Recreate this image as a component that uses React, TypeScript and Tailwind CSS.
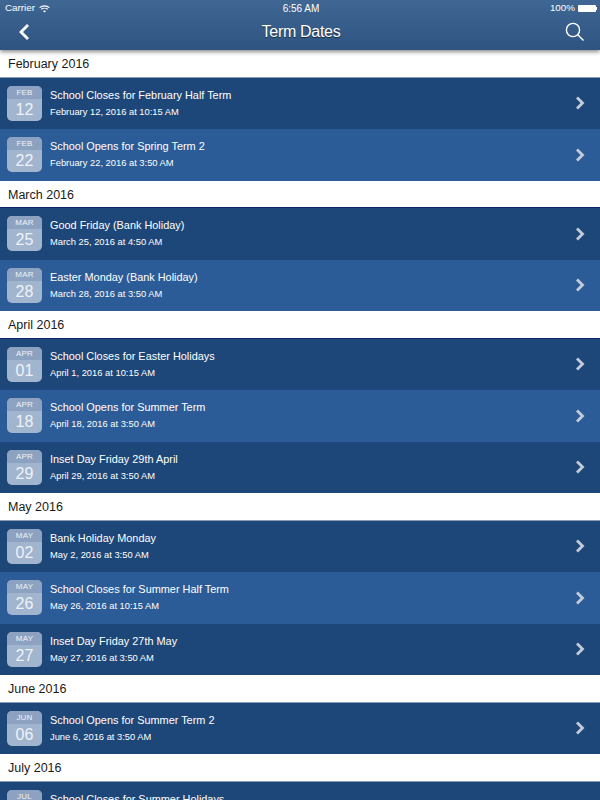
type Item = { mon: string; day: string; title: string; when: string }

const sections: { name: string; line: string; items: Item[] }[] = [
  {
    name: 'February 2016',
    line: 'border-b-[#8a9cb5]',
    items: [
      { mon: 'FEB', day: '12', title: 'School Closes for February Half Term', when: 'February 12, 2016 at 10:15 AM' },
      { mon: 'FEB', day: '22', title: 'School Opens for Spring Term 2', when: 'February 22, 2016 at 3:50 AM' },
    ],
  },
  {
    name: 'March 2016',
    line: 'border-b-[#10246b]',
    items: [
      { mon: 'MAR', day: '25', title: 'Good Friday (Bank Holiday)', when: 'March 25, 2016 at 4:50 AM' },
      { mon: 'MAR', day: '28', title: 'Easter Monday (Bank Holiday)', when: 'March 28, 2016 at 3:50 AM' },
    ],
  },
  {
    name: 'April 2016',
    line: 'border-b-[#10246b]',
    items: [
      { mon: 'APR', day: '01', title: 'School Closes for Easter Holidays', when: 'April 1, 2016 at 10:15 AM' },
      { mon: 'APR', day: '18', title: 'School Opens for Summer Term', when: 'April 18, 2016 at 3:50 AM' },
      { mon: 'APR', day: '29', title: 'Inset Day Friday 29th April', when: 'April 29, 2016 at 3:50 AM' },
    ],
  },
  {
    name: 'May 2016',
    line: 'border-b-[#8a9cb5]',
    items: [
      { mon: 'MAY', day: '02', title: 'Bank Holiday Monday', when: 'May 2, 2016 at 3:50 AM' },
      { mon: 'MAY', day: '26', title: 'School Closes for Summer Half Term', when: 'May 26, 2016 at 10:15 AM' },
      { mon: 'MAY', day: '27', title: 'Inset Day Friday 27th May', when: 'May 27, 2016 at 3:50 AM' },
    ],
  },
  {
    name: 'June 2016',
    line: 'border-b-[#8a9cb5]',
    items: [{ mon: 'JUN', day: '06', title: 'School Opens for Summer Term 2', when: 'June 6, 2016 at 3:50 AM' }],
  },
  {
    name: 'July 2016',
    line: 'border-b-[#8a9cb5]',
    items: [{ mon: 'JUL', day: '21', title: 'School Closes for Summer Holidays', when: 'July 21, 2016 at 3:50 AM' }],
  },
]

function Row({ item, odd }: { item: Item; odd: boolean }) {
  return (
    <div className={`h-[51.5px] shrink-0 flex items-center pl-[7px] pr-[15px] ${odd ? 'bg-[#2c5c98]' : 'bg-[#1e4779]'}`}>
      <div className="w-[35px] h-[35px] rounded-[5px] overflow-hidden bg-[#a2b5cf] shrink-0 flex flex-col text-center text-[#eef2f7]">
        <div className="h-[13px] bg-[#8da2c0] text-[8px] leading-[13px] tracking-[0.2px]">{item.mon}</div>
        <div className="text-[16px] leading-[21px]">{item.day}</div>
      </div>
      <div className="ml-[8px] flex-1 min-w-0 text-white mt-[-1px]">
        <div className="text-[10.9px] leading-[14px]">{item.title}</div>
        <div className="text-[9.35px] leading-[12px] mt-[4px]">{item.when}</div>
      </div>
      <svg width="10" height="14" viewBox="0 0 10 14" fill="none" stroke="#c3ccd8" strokeWidth="2.8">
        <path d="M2 1.5 L7.5 7 L2 12.5" />
      </svg>
    </div>
  )
}

export default function App() {
  return (
    <div className="relative w-[600px] h-[800px] overflow-hidden bg-white font-['Liberation_Sans',sans-serif]">
      <div className="relative z-10 h-[50px] bg-gradient-to-b from-[#406793] to-[#2e5582] shadow-[0_2px_4px_rgba(0,0,0,0.45)] text-white">
        <div className="h-[17px] flex items-center justify-between pl-[5px] pr-[3px] text-[9.8px]">
          <div className="flex items-center gap-[4px] w-[100px]">
            <span>Carrier</span>
            <svg width="11" height="8" viewBox="0 0 11 8" fill="none" stroke="white" strokeWidth="1.2">
              <path d="M0.6 2.6 C3.4 0.2 7.6 0.2 10.4 2.6" />
              <path d="M2.3 4.3 C4 2.9 7 2.9 8.7 4.3" />
              <path d="M5.5 7.6 L3.9 5.9 C4.8 5.2 6.2 5.2 7.1 5.9 Z" fill="white" stroke="none" />
            </svg>
          </div>
          <span className="text-[10px] font-medium">6:56 AM</span>
          <div className="flex items-center justify-end w-[100px]">
            <span className="mr-[3px]">100%</span>
            <div className="w-[18px] h-[7px] rounded-[1px] bg-white" />
            <div className="w-[1px] h-[3px] bg-white" />
          </div>
        </div>
        <div className="h-[33px] flex items-center justify-between pl-[16px] pr-[14px]">
          <svg width="22" height="18" viewBox="0 0 22 18" fill="none" stroke="white" strokeWidth="2.8" className="mt-[-4px]">
            <path d="M12 2 L5 9 L12 16" />
          </svg>
          <span className="text-[16px] tracking-[-0.3px] mt-[-3px] [text-shadow:0_1px_1px_rgba(0,0,0,0.6)]">Term Dates</span>
          <svg width="22" height="22" viewBox="0 0 22 22" fill="none" stroke="white" strokeWidth="1.4" className="mt-[-3px]">
            <circle cx="9" cy="9" r="6.6" />
            <path d="M13.8 13.8 L19.5 19.5" />
          </svg>
        </div>
      </div>
      {sections.map(sec => {
        return (
          <div key={sec.name} className="flex flex-col">
            <div className={`h-[27.5px] shrink-0 bg-white pl-[8px] text-[12.5px] leading-[29px] text-[#1a1a1a] border-b ${sec.line}`}>{sec.name}</div>
            {sec.items.map((item, i) => (
              <Row key={item.title} item={item} odd={i % 2 === 1} />
            ))}
          </div>
        )
      })}
    </div>
  )
}
